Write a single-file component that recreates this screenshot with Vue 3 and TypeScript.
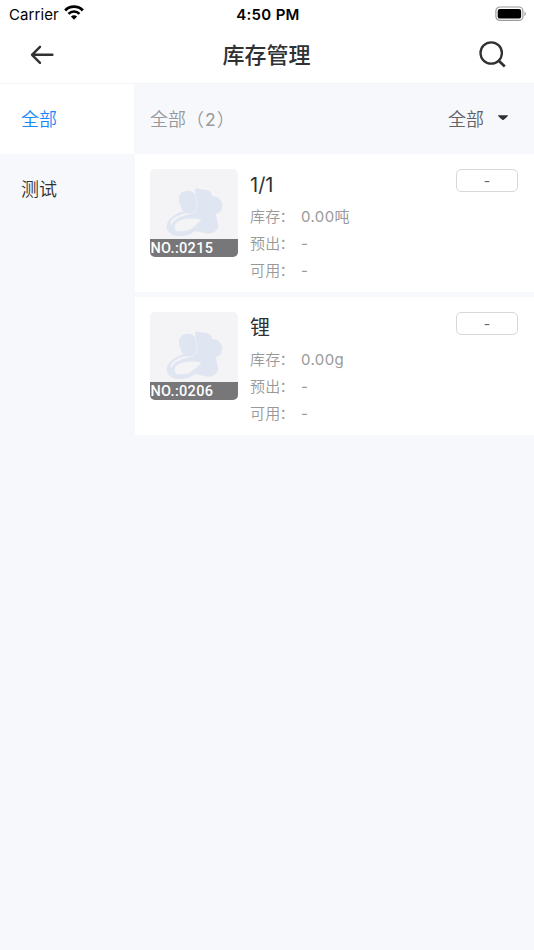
<script setup lang="ts">
import { ref } from 'vue'

interface StockItem {
  no: string
  name: string
  stock: string
  reserved: string
  available: string
  tag: string
}

const categories: string[] = ['全部', '测试']
const active = ref(0)

const items: StockItem[] = [
  { no: '0215', name: '1/1', stock: '0.00吨', reserved: '-', available: '-', tag: '-' },
  { no: '0206', name: '锂', stock: '0.00g', reserved: '-', available: '-', tag: '-' },
]
</script>

<template>
  <div class="screen">
    <div class="status">
      <div class="carrier">
        <span>Carrier</span>
        <svg class="wifi" viewBox="0 0 20 15" width="20" height="15">
          <path d="M1.2 5.4A12.2 12.2 0 0 1 18.8 5.4" fill="none" stroke="#000" stroke-width="2.9" />
          <path d="M4.5 8.9A7.6 7.6 0 0 1 15.5 8.9" fill="none" stroke="#000" stroke-width="2.5" />
          <path d="M10 14.8L6.9 11.6A4.5 4.5 0 0 1 13.1 11.6Z" fill="#000" />
        </svg>
      </div>
      <span class="time">4:50 PM</span>
      <svg class="battery" viewBox="0 0 32 16" width="32" height="16">
        <rect x="0.9" y="1" width="27" height="13.4" rx="4" fill="none" stroke="#999" stroke-width="1.2" />
        <rect x="2.7" y="2.9" width="23.4" height="9.7" rx="2.2" fill="#000" />
        <path d="M29.5 5.4C31.3 6.2 31.3 9.2 29.5 10Z" fill="#999" />
      </svg>
    </div>

    <header class="nav">
      <svg viewBox="0 0 24 20" width="24" height="20" fill="none" stroke="#303133" stroke-width="2.4" stroke-linecap="round" stroke-linejoin="round">
        <path d="M10 1.8L2 9.8L10 17.8M2 9.8H22.4" />
      </svg>
      <h1>库存管理</h1>
      <svg viewBox="0 0 28 28" width="28" height="28" fill="none" stroke="#303133" stroke-width="2.3">
        <circle cx="12.2" cy="12" r="10.7" />
        <path d="M19.5 19.6L25.8 25.4" stroke-width="2.7" />
      </svg>
    </header>

    <main class="body">
      <aside class="side">
        <div
          v-for="(c, i) in categories"
          :key="c"
          class="category"
          :class="{ active: i === active }"
          @click="active = i"
        >{{ c }}</div>
      </aside>

      <section class="content">
        <div class="filter">
          <span class="count">全部（<span class="num">{{ items.length }}</span>）</span>
          <div class="select">
            <span>全部</span>
            <svg viewBox="0 0 12 6" width="12" height="6"><path d="M1 0.3H11Q11 1.6 6.7 4.8Q6 5.4 5.3 4.8Q1 1.6 1 0.3Z" fill="#303133" /></svg>
          </div>
        </div>

        <article v-for="item in items" :key="item.no" class="card">
          <div class="thumb">
            <svg viewBox="15 27 264 264" width="88" height="88">
              <path fill="#dfe5f1" d="M126 92C142 91 151 101 153 113L150 88Q154 84 163 87L189 91Q199 94 201 108Q226 108 232 133Q234 157 212 162Q216 171 216 183Q226 198 214 210Q207 221 188 221L151 213C138 222 124 228 108 228C86 230 66 219 65 201C64 182 84 164 113 154L119 157C110 151 108 144 107 138C99 123 98 94 126 92Z" />
              <path d="M90 205C86 191 99 182 119 177C137 174 156 175 170 179C160 187 147 203 132 210C118 215 104 215 94 213Q91 210 90 205Z" fill="#f4f4f6" />
              <path d="M121 160C97 166 80 176 77 189C76 195 79 196 81 192C86 179 102 170 125 165C140 161 150 160 154 150Q143 163 121 160Z" fill="#f4f4f6" />
              <path d="M152 108C155 122 159 137 154 151" fill="none" stroke="#edf0f6" stroke-width="2.5" />
            </svg>
            <div class="no">NO.:{{ item.no }}</div>
          </div>
          <div class="info">
            <h2>{{ item.name }}</h2>
            <div class="row"><span class="label">库存<span class="colon">：</span></span><span class="value">{{ item.stock }}</span></div>
            <div class="row"><span class="label">预出<span class="colon">：</span></span><span class="value">{{ item.reserved }}</span></div>
            <div class="row"><span class="label">可用<span class="colon">：</span></span><span class="value">{{ item.available }}</span></div>
          </div>
          <div class="tag">{{ item.tag }}</div>
        </article>
      </section>
    </main>
  </div>
</template>

<style>
body {
  background: #f7f8fc;
}
</style>

<style scoped>
.screen {
  min-height: 950px;
  background: #f7f8fc;
  font-family: Inter, 'Noto Sans CJK SC', sans-serif;
  color: #303133;
}
.status {
  display: grid;
  grid-template-columns: 1fr auto 1fr;
  align-items: center;
  height: 28px;
  padding: 0 7px 0 9px;
  background: #fff;
  color: #000;
}
.carrier {
  display: flex;
  align-items: center;
  gap: 5px;
  font-size: 15px;
  letter-spacing: 0.1px;
}
.wifi {
  margin-top: -3px;
}
.time {
  font-size: 15px;
  font-weight: 600;
  letter-spacing: 0.3px;
}
.battery {
  justify-self: end;
  margin-top: -1px;
}
.nav {
  display: flex;
  align-items: center;
  justify-content: space-between;
  box-sizing: border-box;
  height: 55px;
  padding: 0 27px 2px 30px;
  background: #fff;
}
h1 {
  margin: 0;
  font-size: 22px;
  line-height: 32px;
  font-weight: 500;
}
.body {
  display: flex;
  border-top: 1px solid #f3f4f7;
}
.side {
  width: 134px;
  flex: none;
}
.category {
  height: 70px;
  padding-left: 21px;
  line-height: 72px;
  font-size: 18px;
  font-weight: 350;
}
.category.active {
  background: #fff;
  color: #1989fa;
}
.content {
  flex: 1;
  min-width: 0;
}
.filter {
  display: flex;
  align-items: center;
  justify-content: space-between;
  box-sizing: border-box;
  height: 70px;
  padding: 0 25px 2px 16px;
  font-size: 18px;
  font-weight: 350;
}
.count {
  color: #999;
}
.num {
  padding: 0 1px;
  font-size: 17.5px;
  font-weight: 400;
}
.select {
  display: flex;
  align-items: center;
  gap: 13px;
  color: #606266;
}
.card {
  display: flex;
  align-items: flex-start;
  box-sizing: border-box;
  height: 138px;
  margin: 0 0 5px 1px;
  padding: 15px 16px 0 15px;
  background: #fff;
}
.thumb {
  position: relative;
  flex: none;
  width: 88px;
  height: 88px;
  border-radius: 5px;
  overflow: hidden;
  background: #f4f4f6;
}
.thumb svg {
  display: block;
}
.no {
  position: absolute;
  left: 0;
  right: 0;
  bottom: 0;
  height: 18px;
  padding-left: 0.5px;
  line-height: 20px;
  background: #777779;
  color: #fff;
  font-family: Roboto, sans-serif;
  font-size: 14.5px;
  font-weight: 500;
  letter-spacing: 0.3px;
}
.info {
  flex: 1;
  margin-left: 12px;
}
h2 {
  margin: 1px 0 3px;
  font-size: 20px;
  line-height: 31px;
  height: 30px;
  font-weight: 400;
}
.row {
  display: flex;
  height: 27px;
  line-height: 27px;
  font-size: 15px;
  font-weight: 350;
  letter-spacing: 0.2px;
  color: #999;
}
.label {
  width: 51px;
  flex: none;
}
.colon {
  margin-left: -1px;
}
.value {
  font-weight: 400;
  letter-spacing: 0.4px;
}
.tag {
  box-sizing: border-box;
  width: 62px;
  height: 23px;
  border: 1px solid #d8d8d8;
  border-radius: 5px;
  text-align: center;
  font-size: 14px;
  line-height: 21px;
  color: #606266;
}
</style>
